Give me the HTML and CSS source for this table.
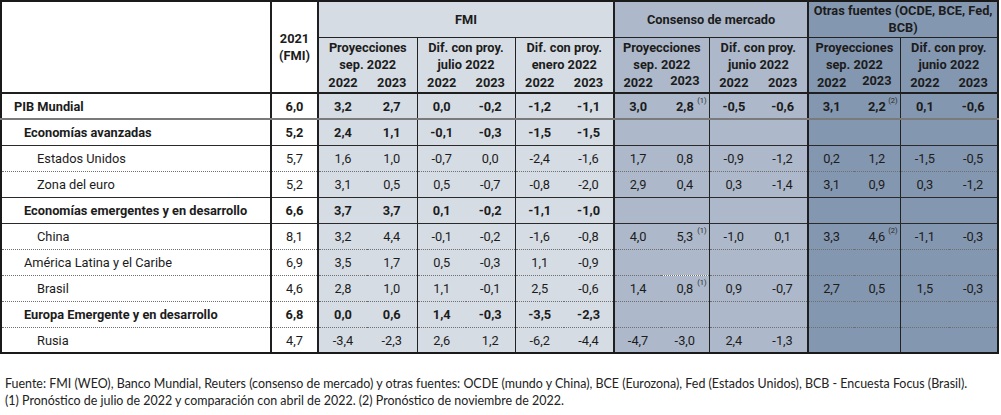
FILE: index.html
```html
<!DOCTYPE html>
<html lang="es">
<head>
<meta charset="utf-8">
<title>PIB Mundial - Proyecciones</title>
<link rel="stylesheet" href="styles.css">
</head>
<body>
<table class="grid">
  <colgroup>
    <col class="c-label"><col class="c-2021">
    <col class="w49"><col class="w50"><col class="w49"><col class="w49"><col class="w49"><col class="w50">
    <col class="w47"><col class="w48"><col class="w49"><col class="w50">
    <col class="w46"><col class="w46"><col class="w49"><col class="w49">
  </colgroup>
  <thead>
    <tr class="h1">
      <th rowspan="3" class="label g-end"></th>
      <th rowspan="3" class="g-end">2021<br>(FMI)</th>
      <th colspan="6" class="fmi g-end">FMI</th>
      <th colspan="4" class="cons g-end">Consenso de mercado</th>
      <th colspan="4" class="otras">Otras fuentes (OCDE, BCE, Fed, BCB)</th>
    </tr>
    <tr class="h2">
      <th colspan="2" class="fmi s-end">Proyecciones<br>sep. 2022</th>
      <th colspan="2" class="fmi s-end">Dif. con proy.<br>julio 2022</th>
      <th colspan="2" class="fmi g-end">Dif. con proy.<br>enero 2022</th>
      <th colspan="2" class="cons s-end">Proyecciones<br>sep. 2022</th>
      <th colspan="2" class="cons g-end">Dif. con proy.<br>junio 2022</th>
      <th colspan="2" class="otras s-end">Proyecciones<br>sep. 2022</th>
      <th colspan="2" class="otras">Dif. con proy.<br>junio 2022</th>
    </tr>
    <tr class="h3">
      <th class="fmi">2022</th><th class="fmi s-end">2023</th>
      <th class="fmi">2022</th><th class="fmi s-end">2023</th>
      <th class="fmi">2022</th><th class="fmi g-end">2023</th>
      <th class="cons">2022</th><th class="cons s-end raised">2023</th>
      <th class="cons">2022</th><th class="cons g-end">2023</th>
      <th class="otras">2022</th><th class="otras s-end raised">2023</th>
      <th class="otras">2022</th><th class="otras">2023</th>
    </tr>
  </thead>
  <tbody>
    <tr class="bold b-gray">
      <td class="label l0 g-end">PIB Mundial</td><td class="g-end">6,0</td>
      <td class="fmi">3,2</td><td class="fmi s-end">2,7</td>
      <td class="fmi">0,0</td><td class="fmi s-end">-0,2</td>
      <td class="fmi">-1,2</td><td class="fmi g-end">-1,1</td>
      <td class="cons">3,0</td><td class="cons s-end note">2,8<sup>(1)</sup></td>
      <td class="cons">-0,5</td><td class="cons g-end">-0,6</td>
      <td class="otras">3,1</td><td class="otras s-end note">2,2<sup>(2)</sup></td>
      <td class="otras">0,1</td><td class="otras">-0,6</td>
    </tr>
    <tr class="bold b-solid">
      <td class="label l1 g-end">Economías avanzadas</td><td class="g-end">5,2</td>
      <td class="fmi">2,4</td><td class="fmi s-end">1,1</td>
      <td class="fmi">-0,1</td><td class="fmi s-end">-0,3</td>
      <td class="fmi">-1,5</td><td class="fmi g-end">-1,5</td>
      <td class="cons"></td><td class="cons s-end"></td>
      <td class="cons"></td><td class="cons g-end"></td>
      <td class="otras"></td><td class="otras s-end"></td>
      <td class="otras"></td><td class="otras"></td>
    </tr>
    <tr class="b-dot">
      <td class="label l2 g-end">Estados Unidos</td><td class="g-end">5,7</td>
      <td class="fmi">1,6</td><td class="fmi s-end">1,0</td>
      <td class="fmi">-0,7</td><td class="fmi s-end">0,0</td>
      <td class="fmi">-2,4</td><td class="fmi g-end">-1,6</td>
      <td class="cons">1,7</td><td class="cons s-end">0,8</td>
      <td class="cons">-0,9</td><td class="cons g-end">-1,2</td>
      <td class="otras">0,2</td><td class="otras s-end">1,2</td>
      <td class="otras">-1,5</td><td class="otras">-0,5</td>
    </tr>
    <tr class="b-solid">
      <td class="label l2 g-end">Zona del euro</td><td class="g-end">5,2</td>
      <td class="fmi">3,1</td><td class="fmi s-end">0,5</td>
      <td class="fmi">0,5</td><td class="fmi s-end">-0,7</td>
      <td class="fmi">-0,8</td><td class="fmi g-end">-2,0</td>
      <td class="cons">2,9</td><td class="cons s-end">0,4</td>
      <td class="cons">0,3</td><td class="cons g-end">-1,4</td>
      <td class="otras">3,1</td><td class="otras s-end">0,9</td>
      <td class="otras">0,3</td><td class="otras">-1,2</td>
    </tr>
    <tr class="bold b-solid">
      <td class="label l1 g-end">Economías emergentes y en desarrollo</td><td class="g-end">6,6</td>
      <td class="fmi">3,7</td><td class="fmi s-end">3,7</td>
      <td class="fmi">0,1</td><td class="fmi s-end">-0,2</td>
      <td class="fmi">-1,1</td><td class="fmi g-end">-1,0</td>
      <td class="cons"></td><td class="cons s-end"></td>
      <td class="cons"></td><td class="cons g-end"></td>
      <td class="otras"></td><td class="otras s-end"></td>
      <td class="otras"></td><td class="otras"></td>
    </tr>
    <tr class="b-dot">
      <td class="label l2 g-end">China</td><td class="g-end">8,1</td>
      <td class="fmi">3,2</td><td class="fmi s-end">4,4</td>
      <td class="fmi">-0,1</td><td class="fmi s-end">-0,2</td>
      <td class="fmi">-1,6</td><td class="fmi g-end">-0,8</td>
      <td class="cons">4,0</td><td class="cons s-end note">5,3<sup>(1)</sup></td>
      <td class="cons">-1,0</td><td class="cons g-end">0,1</td>
      <td class="otras">3,3</td><td class="otras s-end note">4,6<sup>(2)</sup></td>
      <td class="otras">-1,1</td><td class="otras">-0,3</td>
    </tr>
    <tr class="b-dot">
      <td class="label l1 g-end">América Latina y el Caribe</td><td class="g-end">6,9</td>
      <td class="fmi">3,5</td><td class="fmi s-end">1,7</td>
      <td class="fmi">0,5</td><td class="fmi s-end">-0,3</td>
      <td class="fmi">1,1</td><td class="fmi g-end">-0,9</td>
      <td class="cons"></td><td class="cons s-end"></td>
      <td class="cons"></td><td class="cons g-end"></td>
      <td class="otras"></td><td class="otras s-end"></td>
      <td class="otras"></td><td class="otras"></td>
    </tr>
    <tr class="b-dot">
      <td class="label l2 g-end">Brasil</td><td class="g-end">4,6</td>
      <td class="fmi">2,8</td><td class="fmi s-end">1,0</td>
      <td class="fmi">1,1</td><td class="fmi s-end">-0,1</td>
      <td class="fmi">2,5</td><td class="fmi g-end">-0,6</td>
      <td class="cons">1,4</td><td class="cons s-end note">0,8<sup>(1)</sup></td>
      <td class="cons">0,9</td><td class="cons g-end">-0,7</td>
      <td class="otras">2,7</td><td class="otras s-end">0,5</td>
      <td class="otras">1,5</td><td class="otras">-0,3</td>
    </tr>
    <tr class="bold b-dot">
      <td class="label l1 g-end">Europa Emergente y en desarrollo</td><td class="g-end">6,8</td>
      <td class="fmi">0,0</td><td class="fmi s-end">0,6</td>
      <td class="fmi">1,4</td><td class="fmi s-end">-0,3</td>
      <td class="fmi">-3,5</td><td class="fmi g-end">-2,3</td>
      <td class="cons"></td><td class="cons s-end"></td>
      <td class="cons"></td><td class="cons g-end"></td>
      <td class="otras"></td><td class="otras s-end"></td>
      <td class="otras"></td><td class="otras"></td>
    </tr>
    <tr class="last">
      <td class="label l2 g-end">Rusia</td><td class="g-end">4,7</td>
      <td class="fmi">-3,4</td><td class="fmi s-end">-2,3</td>
      <td class="fmi">2,6</td><td class="fmi s-end">1,2</td>
      <td class="fmi">-6,2</td><td class="fmi g-end">-4,4</td>
      <td class="cons">-4,7</td><td class="cons s-end">-3,0</td>
      <td class="cons">2,4</td><td class="cons g-end">-1,3</td>
      <td class="otras"></td><td class="otras s-end"></td>
      <td class="otras"></td><td class="otras"></td>
    </tr>
  </tbody>
</table>
<div class="notes">
  <p>Fuente: FMI (WEO), Banco Mundial, Reuters (consenso de mercado) y otras fuentes: OCDE (mundo y China), BCE (Eurozona), Fed (Estados Unidos), BCB - Encuesta Focus (Brasil).</p>
  <p>(1) Pronóstico de julio de 2022 y comparación con abril de 2022. (2) Pronóstico de noviembre de 2022.</p>
</div>
</body>
</html>
```

FILE: styles.css
```css
html, body {
  margin: 0;
  padding: 0;
  background: #ffffff;
}

.grid {
  border-collapse: collapse;
  table-layout: fixed;
  width: 998px;
  font-family: Roboto, "Liberation Sans", sans-serif;
  font-size: 12.8px;
  color: #1c1c1c;
  border: 2px solid #1a1a1a;
}

.c-label { width: 270px; }
.c-2021 { width: 47px; }
.w46 { width: 46px; }
.w47 { width: 47px; }
.w48 { width: 48px; }
.w49 { width: 49px; }
.w50 { width: 50px; }

.grid th,
.grid td {
  padding: 0;
  text-align: center;
  vertical-align: middle;
  overflow: visible;
  white-space: nowrap;
}

.grid th {
  font-weight: 700;
  line-height: 17px;
}

.fmi { background: #d6dce4; }
.cons { background: #adb9ca; }
.otras { background: #8497b0; }

.g-end { border-right: 2px solid #1f1f1f; }
.s-end { border-right: 1px solid #222222; }

.h1 { height: 36px; }
.h1 th { border-bottom: 1px solid #222222; }
.h1 th.label,
.h1 th[rowspan] { border-bottom: 2px solid #1f1f1f; }
.h1 .otras { white-space: normal; padding: 0 3px; }

.h2 { height: 37px; }
.h2 th { vertical-align: top; padding-top: 1px; }

.h3 { height: 19px; }
.h3 th {
  border-bottom: 2px solid #1f1f1f;
  vertical-align: top;
  line-height: 17px;
}
.h3 th.raised { line-height: 13px; }

.grid tbody tr { height: 26px; }
.grid tbody td { line-height: 16px; padding-top: 2px; }

.bold td { font-weight: 700; }

.b-gray td { border-bottom: 2px solid #7a7a7a; }
.b-solid td { border-bottom: 1px solid #2a2a2a; }
.b-dot td { border-bottom: 1px dotted #6f6f6f; }
.last td { border-bottom: 2px solid #1a1a1a; }

.label { text-align: left !important; }
.l0 { padding-left: 12px !important; }
.l1 { padding-left: 22px !important; }
.l2 { padding-left: 35px !important; }

.note { position: relative; }
.note sup {
  position: absolute;
  top: 2px;
  right: 2px;
  font-size: 7.5px;
  font-weight: 400;
  line-height: 9px;
  color: #2a2a2a;
}

.notes {
  padding: 21px 0 0 5px;
  font-family: Lato, "Open Sans", sans-serif;
  font-size: 12.45px;
  line-height: 17px;
  color: #222222;
}
.notes p { margin: 0; }
```
